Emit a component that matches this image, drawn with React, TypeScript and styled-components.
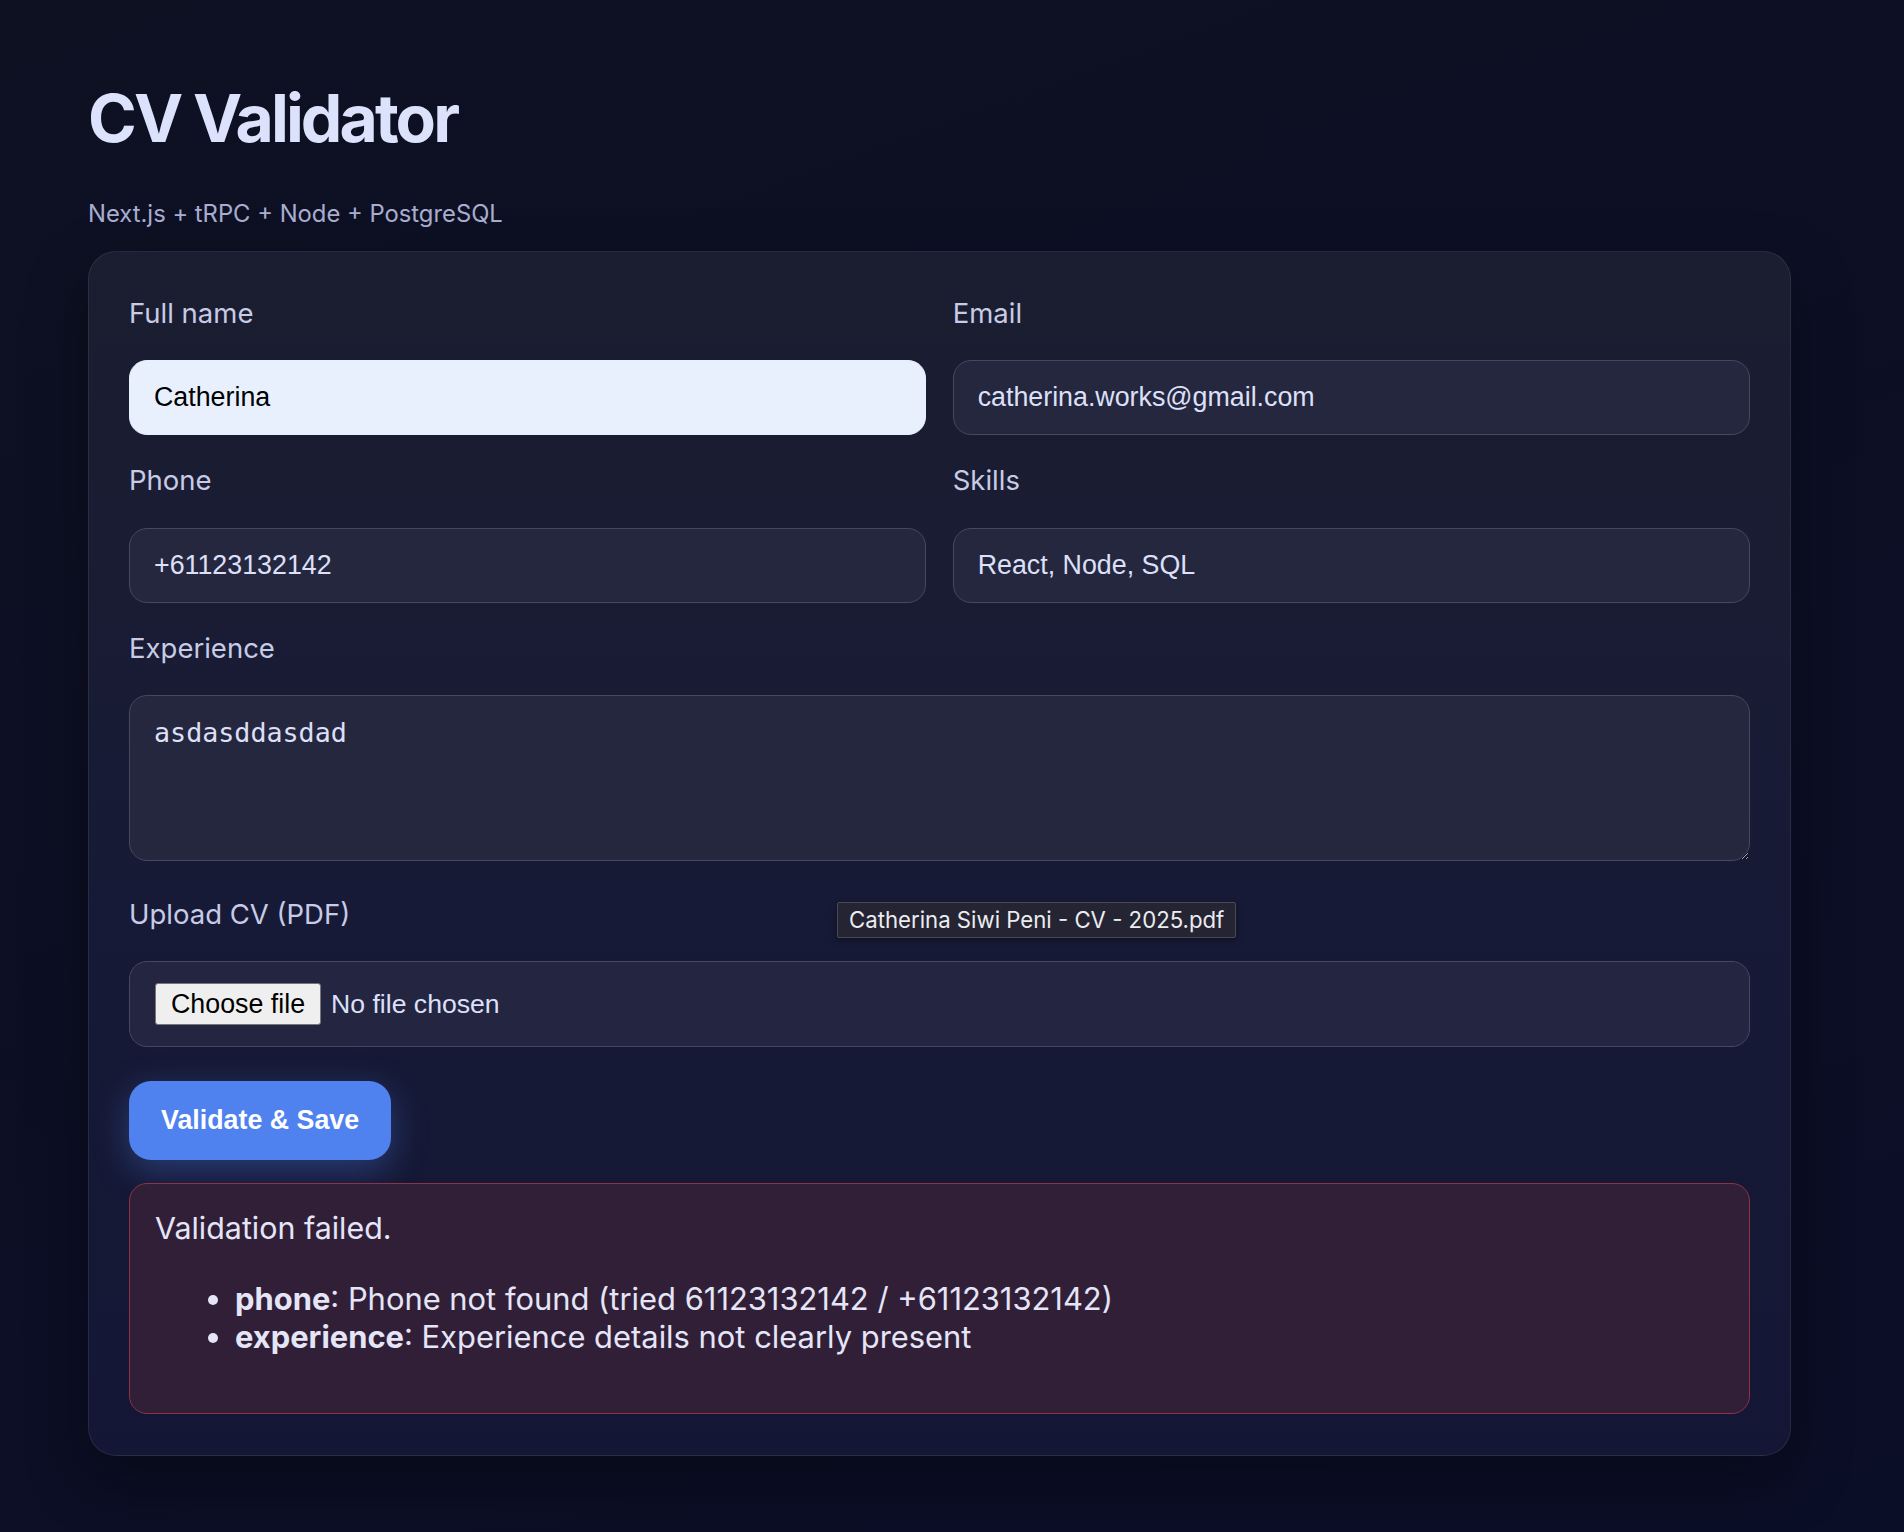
import React from "react";
import styled, { createGlobalStyle } from "styled-components";

const GlobalStyle = createGlobalStyle`
  html, body {
    margin: 0;
    padding: 0;
  }
  html {
    background: linear-gradient(160deg, #0e1122 0%, #0c0f25 60%, #0b0e27 100%);
    min-height: 100%;
  }
  body {
    min-height: 1532px;
    font-family: Inter, "Noto Sans", sans-serif;
    color: #dde0f8;
  }
`;

const Page = styled.div`
  box-sizing: border-box;
  padding: 78px 0 0 88px;
  width: 1904px;
`;

const Title = styled.h1`
  margin: 0;
  font-family: Inter, sans-serif;
  font-weight: 700;
  font-size: 66px;
  line-height: normal;
  letter-spacing: -0.044em;
  color: #dde2fc;
`;

const Subtitle = styled.p`
  margin: 41px 0 22.7px;
  font-family: Inter, sans-serif;
  font-size: 23.8px;
  line-height: normal;
  color: #a9aed0;
`;

const Card = styled.div`
  position: relative;
  box-sizing: border-box;
  width: 1703px;
  padding: 40px 40px 41px;
  border: 1px solid rgba(255, 255, 255, 0.08);
  border-radius: 28px;
  background: linear-gradient(180deg, #1b1e30 0%, #171a36 55%, #131735 100%);
  box-shadow: 0 24px 60px rgba(0, 0, 0, 0.35);
`;

const Form = styled.form`
  display: flex;
  flex-direction: column;
  gap: 24.4px;
`;

const Row = styled.div`
  display: grid;
  grid-template-columns: 1fr 1fr;
  column-gap: 26.4px;
`;

const Field = styled.div<{ $mt?: number }>`
  display: flex;
  flex-direction: column;
  gap: 26.3px;
  margin-top: ${(p) => p.$mt ?? 0}px;
`;

const Label = styled.label`
  font-family: Inter, sans-serif;
  font-size: 27.5px;
  line-height: 42px;
  color: #c7cbe6;
`;

const TextInput = styled.input<{ $filled?: boolean }>`
  box-sizing: border-box;
  width: 100%;
  height: 75px;
  padding: 0 24px;
  font-family: "Liberation Sans", Arial, sans-serif;
  font-size: 26.8px;
  color: ${(p) => (p.$filled ? "#000000" : "#dde0f8")};
  background: ${(p) => (p.$filled ? "#e8f0fe" : "#25273f")};
  border: 1px solid ${(p) => (p.$filled ? "#e8f0fe" : "#46485f")};
  border-radius: 18px;
  outline: none;
`;

const TextArea = styled.textarea`
  display: block;
  box-sizing: border-box;
  width: 100%;
  height: 166px;
  padding: 21px 24px;
  font-family: "DejaVu Sans Mono", "Liberation Mono", monospace;
  font-size: 26.7px;
  line-height: normal;
  color: #dde0f8;
  background: #25273f;
  border: 1px solid #46485f;
  border-radius: 18px;
  outline: none;
  resize: vertical;
`;

const UploadBox = styled.div`
  box-sizing: border-box;
  display: flex;
  align-items: center;
  gap: 10px;
  height: 86px;
  padding: 0 25px;
  background: #232541;
  border: 1px solid #46485f;
  border-radius: 18px;
`;

const HiddenFile = styled.input`
  display: none;
`;

const ChooseButton = styled.label`
  box-sizing: border-box;
  display: inline-flex;
  align-items: center;
  height: 42px;
  padding: 0 15px;
  font-family: "Liberation Sans", Arial, sans-serif;
  font-size: 26.8px;
  color: #000000;
  background: #efefef;
  border: 1px solid #767676;
  border-radius: 3px;
`;

const FileStatus = styled.span`
  font-family: "Liberation Sans", Arial, sans-serif;
  font-size: 26.6px;
  color: #dde0f8;
`;

const SubmitButton = styled.button`
  align-self: flex-start;
  box-sizing: border-box;
  height: 79px;
  margin-top: 9.3px;
  padding: 0 32px;
  font-family: "Liberation Sans", Arial, sans-serif;
  font-weight: 700;
  font-size: 26.8px;
  color: #ffffff;
  background: #4f82ee;
  border: none;
  border-radius: 22px;
  box-shadow: 0 10px 34px rgba(79, 130, 238, 0.35);
  cursor: pointer;
`;

const ErrorBox = styled.div`
  box-sizing: border-box;
  margin-top: -1.5px;
  padding: 26px 25px 24px;
  min-height: 231.5px;
  background: #311f37;
  border: 1px solid #8d3345;
  border-radius: 18px;
  font-family: Inter, sans-serif;
  color: #e4e5f7;
`;

const ErrorTitle = styled.p`
  margin: 0;
  font-size: 30.4px;
  line-height: normal;
`;

const ErrorList = styled.ul`
  margin: 34px 0 0;
  padding-left: 80px;
  font-size: 30.9px;
  line-height: 37.7px;
`;

const ErrorItem = styled.li`
  & strong {
    font-weight: 700;
  }
`;

const Tooltip = styled.div`
  position: absolute;
  left: 748px;
  top: 650px;
  box-sizing: border-box;
  height: 36px;
  padding: 0 11px;
  display: flex;
  align-items: center;
  font-family: Inter, sans-serif;
  font-size: 22.2px;
  color: #ececf0;
  background: #242433;
  border: 1px solid #4a4a56;
  border-radius: 2px;
  white-space: nowrap;
  box-shadow: 0 2px 6px rgba(0, 0, 0, 0.4);
`;

export default function App() {
  return (
    <>
      <GlobalStyle />
      <Page>
        <Title>CV Validator</Title>
        <Subtitle>Next.js + tRPC + Node + PostgreSQL</Subtitle>
        <Card>
          <Form onSubmit={(e) => e.preventDefault()}>
            <Row>
              <Field>
                <Label htmlFor="fullName">Full name</Label>
                <TextInput id="fullName" $filled defaultValue="Catherina" />
              </Field>
              <Field>
                <Label htmlFor="email">Email</Label>
                <TextInput id="email" defaultValue="catherina.works@gmail.com" />
              </Field>
            </Row>
            <Row>
              <Field>
                <Label htmlFor="phone">Phone</Label>
                <TextInput id="phone" defaultValue="+61123132142" />
              </Field>
              <Field>
                <Label htmlFor="skills">Skills</Label>
                <TextInput id="skills" defaultValue="React, Node, SQL" />
              </Field>
            </Row>
            <Field>
              <Label htmlFor="experience">Experience</Label>
              <TextArea id="experience" defaultValue="asdasddasdad" />
            </Field>
            <Field $mt={7.3}>
              <Label htmlFor="cv">Upload CV (PDF)</Label>
              <UploadBox>
                <HiddenFile id="cv" type="file" accept="application/pdf" />
                <ChooseButton htmlFor="cv">Choose file</ChooseButton>
                <FileStatus>No file chosen</FileStatus>
              </UploadBox>
            </Field>
            <SubmitButton type="submit">Validate &amp; Save</SubmitButton>
            <ErrorBox>
              <ErrorTitle>Validation failed.</ErrorTitle>
              <ErrorList>
                <ErrorItem>
                  <strong>phone</strong>: Phone not found (tried 61123132142 / +61123132142)
                </ErrorItem>
                <ErrorItem>
                  <strong>experience</strong>: Experience details not clearly present
                </ErrorItem>
              </ErrorList>
            </ErrorBox>
          </Form>
          <Tooltip>Catherina Siwi Peni - CV - 2025.pdf</Tooltip>
        </Card>
      </Page>
    </>
  );
}
